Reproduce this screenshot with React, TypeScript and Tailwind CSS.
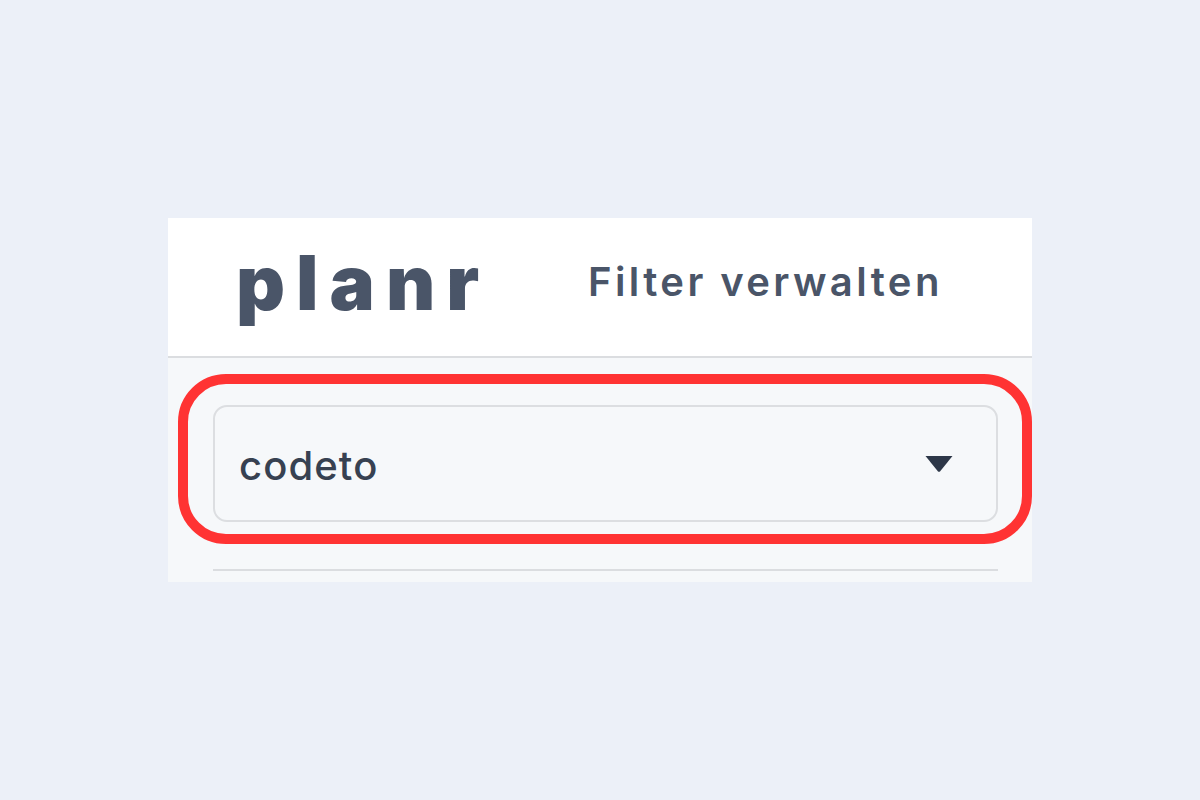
const App = () => {
  return (
    <div className="w-full h-screen flex items-center justify-center bg-[#ecf0f8] font-['Inter',sans-serif]">
      <div className="w-[864px] h-[364px] flex flex-col bg-[#f6f8fa] overflow-hidden">
        <div className="h-[140px] shrink-0 flex items-center bg-white border-b-2 border-[#dbdde0] pl-[68px]">
          <span className="w-[352px] text-[76px] leading-none font-black tracking-[11px] text-[#4a5568] pb-[10px]">
            planr
          </span>
          <span className="text-[40px] leading-none font-semibold tracking-[3.4px] text-[#4a5568] pb-[10px]">
            Filter verwalten
          </span>
        </div>
        <div className="relative flex-1 pl-[45px] pr-[34px] pt-[47px]">
          <div className="h-[117px] flex items-center justify-between pl-[24px] pr-[43px] border-2 border-[#dcdee1] rounded-[14px]">
            <span className="text-[40px] leading-none font-medium tracking-[1.1px] text-[#374151] pt-[4px]">codeto</span>
            <svg width="28" height="16" viewBox="0 0 28 16">
              <path d="M0.5 0 H27.5 L15 15.5 Q14 16 13 15.5 Z" fill="#2d3748" />
            </svg>
          </div>
          <div className="mt-[47px] h-[2px] bg-[#dbdde0]" />
          <div className="absolute left-[10px] top-[16px] w-[854px] h-[170px] border-[10px] border-[#ff3333] rounded-[48px]" />
        </div>
      </div>
    </div>
  );
};

export default App;
